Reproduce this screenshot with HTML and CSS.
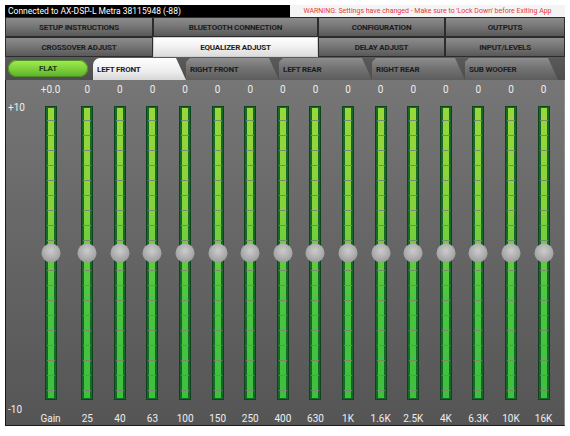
FILE: index.html
```html
<!DOCTYPE html>
<html>
<head>
<meta charset="utf-8">
<link rel="stylesheet" href="styles.css">
</head>
<body>
<div class="app">
  <div class="status">
    <span class="conn">Connected to AX-DSP-L Metra 38115948 (-88)</span>
    <span class="warn">WARNING: Settings have changed - Make sure to 'Lock Down' before Exiting App</span>
  </div>
  <nav class="menu">
    <div class="btn">SETUP INSTRUCTIONS</div>
    <div class="btn">BLUETOOTH CONNECTION</div>
    <div class="btn">CONFIGURATION</div>
    <div class="btn">OUTPUTS</div>
    <div class="btn">CROSSOVER ADJUST</div>
    <div class="btn selected">EQUALIZER ADJUST</div>
    <div class="btn">DELAY ADJUST</div>
    <div class="btn">INPUT/LEVELS</div>
  </nav>
  <div class="tabs">
    <div class="flat">FLAT</div>
    <div class="tab active">LEFT FRONT</div>
    <div class="tab">RIGHT FRONT</div>
    <div class="tab">LEFT REAR</div>
    <div class="tab">RIGHT REAR</div>
    <div class="tab">SUB WOOFER</div>
  </div>
  <div class="eq">
    <div class="scale"><span>+10</span><span>-10</span></div>
    <div class="band gain"><div class="val">+0.0</div><div class="track"><div class="knob"></div></div><div class="freq">Gain</div></div>
    <div class="band"><div class="val">0</div><div class="track"><div class="knob"></div></div><div class="freq">25</div></div>
    <div class="band"><div class="val">0</div><div class="track"><div class="knob"></div></div><div class="freq">40</div></div>
    <div class="band"><div class="val">0</div><div class="track"><div class="knob"></div></div><div class="freq">63</div></div>
    <div class="band"><div class="val">0</div><div class="track"><div class="knob"></div></div><div class="freq">100</div></div>
    <div class="band"><div class="val">0</div><div class="track"><div class="knob"></div></div><div class="freq">150</div></div>
    <div class="band"><div class="val">0</div><div class="track"><div class="knob"></div></div><div class="freq">250</div></div>
    <div class="band"><div class="val">0</div><div class="track"><div class="knob"></div></div><div class="freq">400</div></div>
    <div class="band"><div class="val">0</div><div class="track"><div class="knob"></div></div><div class="freq">630</div></div>
    <div class="band"><div class="val">0</div><div class="track"><div class="knob"></div></div><div class="freq">1K</div></div>
    <div class="band"><div class="val">0</div><div class="track"><div class="knob"></div></div><div class="freq">1.6K</div></div>
    <div class="band"><div class="val">0</div><div class="track"><div class="knob"></div></div><div class="freq">2.5K</div></div>
    <div class="band"><div class="val">0</div><div class="track"><div class="knob"></div></div><div class="freq">4K</div></div>
    <div class="band"><div class="val">0</div><div class="track"><div class="knob"></div></div><div class="freq">6.3K</div></div>
    <div class="band"><div class="val">0</div><div class="track"><div class="knob"></div></div><div class="freq">10K</div></div>
    <div class="band"><div class="val">0</div><div class="track"><div class="knob"></div></div><div class="freq">16K</div></div>
  </div>
</div>
</body>
</html>
```
FILE: styles.css
```css
body {
  margin: 0;
  background: #fff;
  font-family: Roboto, "Liberation Sans", sans-serif;
}
.app {
  margin: 5px 0 0 5px;
  width: 560px;
}
.status {
  height: 12px;
  background: #000;
  display: flex;
  justify-content: space-between;
  align-items: stretch;
}
.conn {
  color: #fff;
  font-size: 8.5px;
  line-height: 12px;
  padding-left: 3px;
  white-space: nowrap;
}
.warn {
  width: 275px;
  background: #f4f4f4;
  color: #e8383a;
  font-size: 7px;
  line-height: 12px;
  text-align: center;
  white-space: nowrap;
}
.menu {
  display: grid;
  grid-template-columns: 148px 165px 127px 120px;
  grid-auto-rows: 20px;
}
.btn {
  box-sizing: border-box;
  border: 1px solid #2c2c2c;
  background: linear-gradient(#8c8c8c, #777 45%, #585858);
  color: #1c1c1c;
  font-size: 8px;
  font-weight: bold;
  letter-spacing: -0.2px;
  display: flex;
  align-items: center;
  justify-content: center;
}
.btn.selected {
  background: linear-gradient(#ffffff, #f0f0f0 50%, #dcdcdc);
  border-color: #cfcfcf;
}
.tabs {
  height: 23px;
  background: linear-gradient(#5a5a5a, #4e4e4e);
  display: flex;
  align-items: flex-end;
}
.flat {
  align-self: center;
  margin-left: 3px;
  width: 80px;
  height: 17px;
  border-radius: 9px;
  background: linear-gradient(#a6ec52, #7ed23c 50%, #5cb02c);
  box-shadow: inset 0 0 0 1px #4c8f26;
  color: #1f3a12;
  font-size: 8px;
  font-weight: bold;
  letter-spacing: -0.2px;
  display: flex;
  align-items: center;
  justify-content: center;
  margin-right: 5px;
}
.tab {
  width: 93px;
  height: 22px;
  box-sizing: border-box;
  padding-left: 4px;
  background: linear-gradient(#8e8e8e, #767676 40%, #5c5c5c);
  clip-path: polygon(0 100%, 0 4px, 4px 0, calc(100% - 10px) 0, 100% 100%);
  color: #1c1c1c;
  font-size: 8px;
  font-weight: bold;
  letter-spacing: -0.2px;
  display: flex;
  align-items: center;
  white-space: nowrap;
}
.tab.active {
  background: linear-gradient(#ffffff, #eeeeee 60%, #d6d6d6);
  border-radius: 7px 9px 0 0;
}
.eq {
  box-sizing: border-box;
  width: 560px;
  height: 346px;
  display: flex;
  border-left: 1px solid #1a1a1a;
  border-bottom: 1px solid #1a1a1a;
  border-right: 1px solid #8c8c8c;
  background: linear-gradient(#767676, #686868 40%, #555555);
  padding-right: 4px;
}
.scale {
  box-sizing: border-box;
  width: 28px;
  display: flex;
  flex-direction: column;
  justify-content: space-between;
  padding: 22px 0 9px 2px;
  color: #eeeeee;
  font-size: 10px;
  line-height: 12px;
}
.band {
  width: 32.6px;
  display: flex;
  flex-direction: column;
  align-items: center;
}
.band.gain {
  width: 33px;
  margin-right: 4px;
}
.val {
  height: 20px;
  line-height: 20px;
  font-size: 10px;
  color: #eeeeee;
  white-space: nowrap;
}
.track {
  position: relative;
  box-sizing: border-box;
  margin-top: 6px;
  width: 12px;
  height: 296px;
  background: #17662a;
  border: 1px solid #0e4419;
}
.track::before {
  content: "";
  position: absolute;
  left: 2px;
  right: 2px;
  top: 1px;
  bottom: 1px;
  background: linear-gradient(#98d83a, #84d23c 35%, #4cc640 65%, #3cc03e);
}
.track::after {
  content: "";
  position: absolute;
  left: 1px;
  right: 1px;
  top: 0;
  bottom: 2px;
  background: repeating-linear-gradient(to bottom, transparent 0 13px, rgba(125,130,115,0.95) 13px 14px, transparent 14px 15px);
}
.knob {
  position: absolute;
  z-index: 1;
  left: 50%;
  top: 50%;
  width: 19px;
  height: 19px;
  transform: translate(-50%, -50%);
  border-radius: 50%;
  background: radial-gradient(circle at 50% 38%, #cccccc, #aaaaaa 55%, #8a8a8a);
}
.freq {
  margin-top: 13px;
  line-height: 12px;
  font-size: 10px;
  color: #eeeeee;
  white-space: nowrap;
}
```
